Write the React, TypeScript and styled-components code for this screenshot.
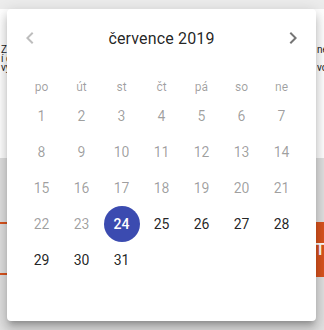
import styled, { createGlobalStyle } from "styled-components";

const GlobalStyle = createGlobalStyle`
  html, body {
    margin: 0;
    padding: 0;
    background: #ffffff;
    font-family: Roboto, "Noto Sans", sans-serif;
  }
  #root {
    width: 324px;
    height: 330px;
    overflow: hidden;
    position: relative;
  }
`;

const Page = styled.div`
  width: 324px;
  height: 330px;
  display: flex;
  flex-direction: column;
`;

const TopBar = styled.div`
  height: 9px;
  background: #ececec;
`;

const Intro = styled.div`
  height: 149px;
  display: flex;
  justify-content: space-between;
  padding-top: 36px;
  box-sizing: border-box;
`;

const TextBlock = styled.div<{ $width: number; $pad?: number }>`
  width: ${(p) => p.$width}px;
  padding-left: ${(p) => p.$pad || 0}px;
  font-size: 10px;
  line-height: 9px;
  color: #222;
  white-space: pre;
  overflow: hidden;
`;

const Lower = styled.div`
  flex: 1;
  background: #e0e0e0;
  padding-top: 64px;
  display: flex;
  justify-content: space-between;
  align-items: flex-start;
`;

const OutlineButton = styled.div`
  width: 200px;
  height: 53px;
  border-top: 2px solid #d9531e;
  border-bottom: 2px solid #d9531e;
  box-sizing: border-box;
`;

const FilledButton = styled.div`
  width: 9px;
  height: 55px;
  background: #d9531e;
  color: #fff;
  font-size: 17px;
  font-weight: 500;
  line-height: 55px;
  overflow: hidden;
`;

const Card = styled.div`
  position: absolute;
  left: 7px;
  top: 9px;
  width: 309px;
  height: 312px;
  background: #fff;
  border-radius: 4px;
  box-shadow: 0px 5px 5px -3px rgba(0, 0, 0, 0.2),
    0px 8px 10px 1px rgba(0, 0, 0, 0.14), 0px 3px 14px 2px rgba(0, 0, 0, 0.12);
  display: flex;
  flex-direction: column;
`;

const Header = styled.div`
  margin-top: 5px;
  height: 48px;
  display: flex;
  align-items: center;
  justify-content: space-between;
`;

const NavButton = styled.button<{ $disabled?: boolean }>`
  width: 46px;
  height: 48px;
  border: none;
  background: transparent;
  padding: 0;
  display: flex;
  align-items: center;
  justify-content: center;
  color: ${(p) => (p.$disabled ? "rgba(0,0,0,0.26)" : "rgba(0,0,0,0.54)")};
`;

const Title = styled.div`
  font-size: 16px;
  color: rgba(0, 0, 0, 0.87);
  letter-spacing: 0.15px;
`;

const WeekRow = styled.div`
  margin-top: 17px;
  display: flex;
  justify-content: center;
`;

const WeekLabel = styled.span`
  width: 36px;
  margin: 0 2px;
  text-align: center;
  font-size: 12px;
  line-height: 16px;
  color: rgba(0, 0, 0, 0.38);
`;

const Days = styled.div`
  margin-top: 3px;
  display: flex;
  flex-direction: column;
`;

const DayRow = styled.div`
  display: flex;
  justify-content: center;
`;

const Day = styled.div<{ $state: "disabled" | "normal" | "selected" | "empty" }>`
  width: 36px;
  height: 36px;
  margin: 0 2px;
  border-radius: 50%;
  display: flex;
  align-items: center;
  justify-content: center;
  font-size: 14px;
  font-weight: ${(p) => (p.$state === "selected" ? 500 : 400)};
  color: ${(p) =>
    p.$state === "selected"
      ? "#fff"
      : p.$state === "disabled"
      ? "rgba(0,0,0,0.38)"
      : "rgba(0,0,0,0.87)"};
  background: ${(p) => (p.$state === "selected" ? "#3b4bb0" : "transparent")};
`;

const Chevron = ({ dir }: { dir: "left" | "right" }) => (
  <svg width="24" height="24" viewBox="0 0 24 24" fill="currentColor">
    {dir === "left" ? (
      <path d="M15.41 16.59L10.83 12l4.58-4.59L14 6l-6 6 6 6 1.41-1.41z" />
    ) : (
      <path d="M8.59 16.59L13.17 12 8.59 7.41 10 6l6 6-6 6-1.41-1.41z" />
    )}
  </svg>
);

const weekdays = ["po", "út", "st", "čt", "pá", "so", "ne"];

export default function App() {
  const weeks: (number | null)[][] = [];
  for (let w = 0; w < 5; w++) {
    const row: (number | null)[] = [];
    for (let d = 1; d <= 7; d++) {
      const n = w * 7 + d;
      row.push(n <= 31 ? n : null);
    }
    weeks.push(row);
  }

  return (
    <>
      <GlobalStyle />
      <Page>
        <TopBar />
        <Intro>
          <TextBlock $width={30} $pad={1}>
            {"Zá\ní č\nvý"}
          </TextBlock>
          <TextBlock $width={7}>{"ne\n\nvo"}</TextBlock>
        </Intro>
        <Lower>
          <OutlineButton />
          <FilledButton>T</FilledButton>
        </Lower>
      </Page>
      <Card>
        <Header>
          <NavButton $disabled>
            <Chevron dir="left" />
          </NavButton>
          <Title>července 2019</Title>
          <NavButton>
            <Chevron dir="right" />
          </NavButton>
        </Header>
        <WeekRow>
          {weekdays.map((w) => (
            <WeekLabel key={w}>{w}</WeekLabel>
          ))}
        </WeekRow>
        <Days>
          {weeks.map((row, i) => (
            <DayRow key={i}>
              {row.map((n, j) => (
                <Day
                  key={j}
                  $state={
                    n === null
                      ? "empty"
                      : n === 24
                      ? "selected"
                      : n < 24
                      ? "disabled"
                      : "normal"
                  }
                >
                  {n}
                </Day>
              ))}
            </DayRow>
          ))}
        </Days>
      </Card>
    </>
  );
}
